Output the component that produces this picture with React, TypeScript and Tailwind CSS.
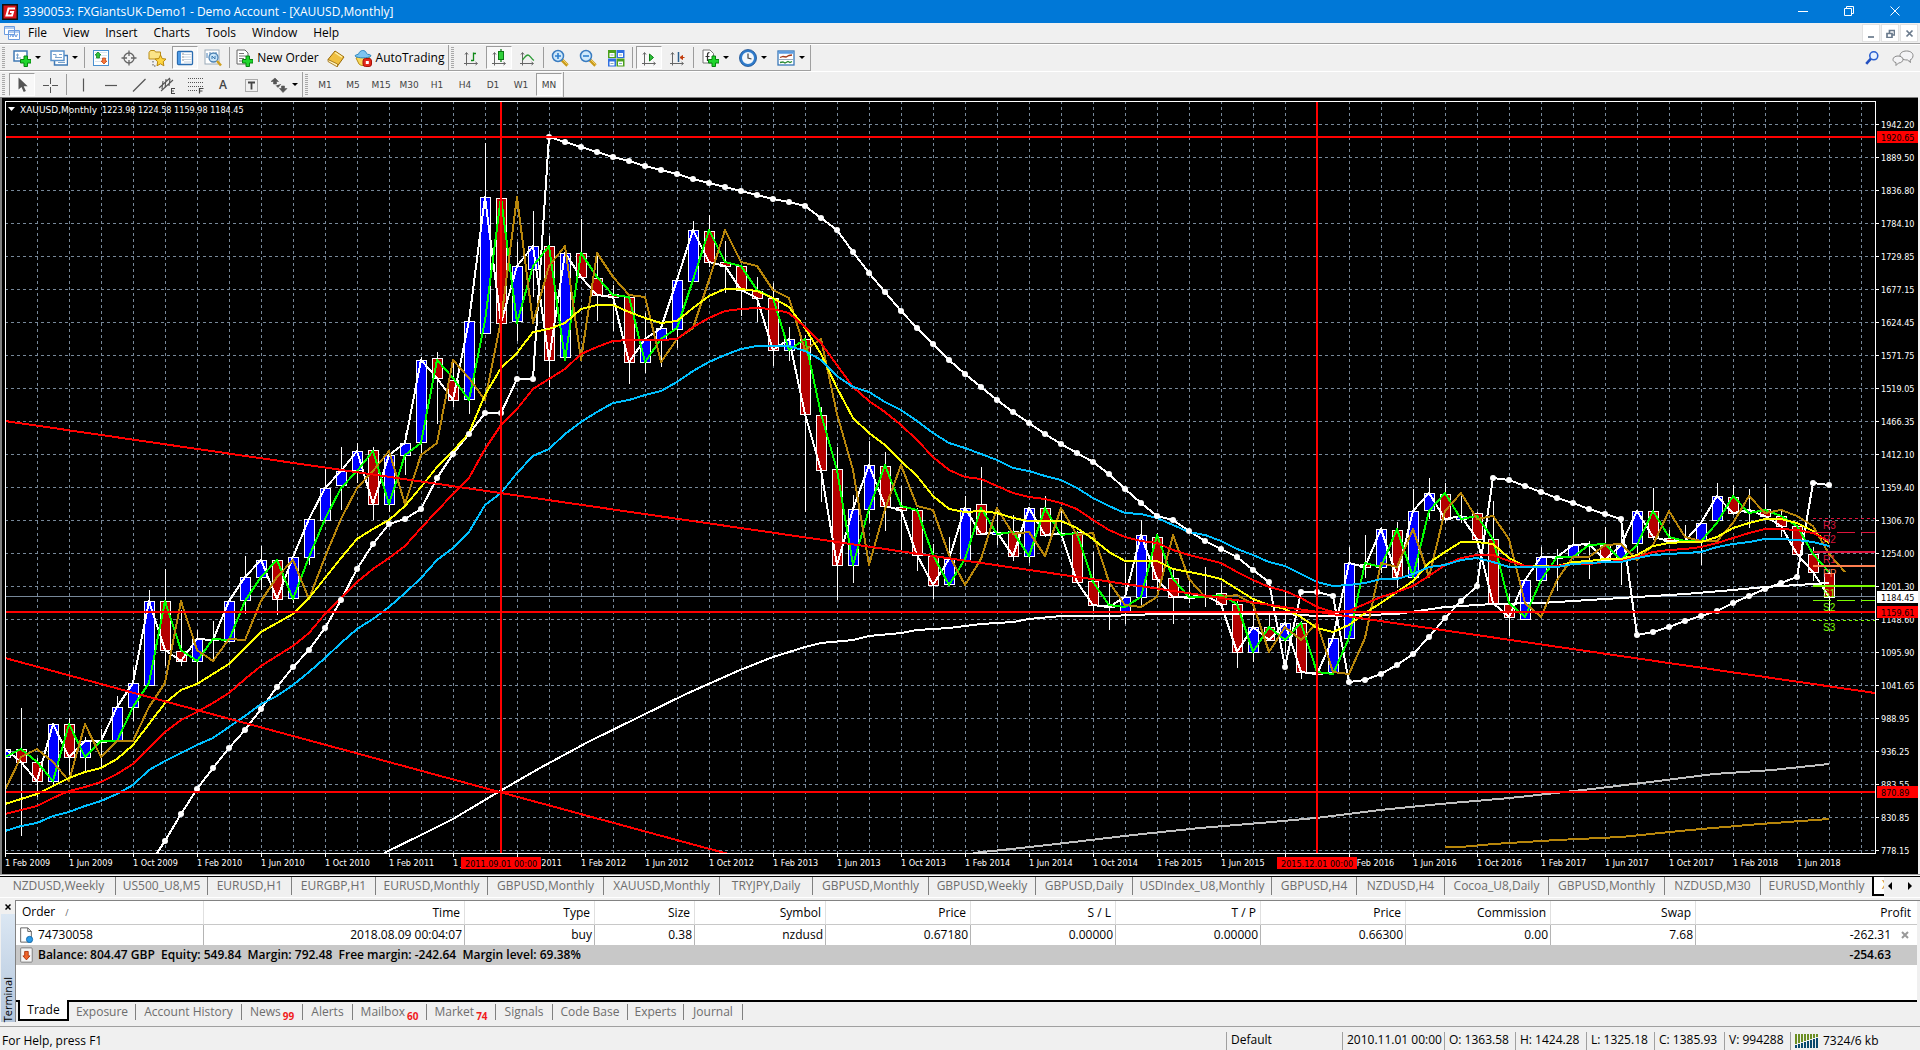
import type { ReactNode } from "react";
import clsx from "clsx";

const STEP = 16;
const LEFT = 5;
const RIGHT = 1875;
const TOP = 101;
const BOTTOM = 853;
const barX = (i: number) => LEFT + i * STEP;

// open, high, low, close - already projected on the chart's y axis
const BARS: [number, number, number, number][] = [
  [757, 708, 836, 749], [749, 708, 836, 762], [762, 758, 797, 781], [781, 724, 785, 724],
  [724, 718, 780, 757], [757, 737, 772, 741], [741, 729, 767, 741], [741, 696, 742, 707],
  [707, 667, 721, 683], [685, 590, 685, 601], [601, 569, 666, 650], [651, 610, 666, 661],
  [661, 630, 683, 639], [639, 621, 660, 640], [641, 600, 642, 601], [600, 556, 614, 577],
  [577, 546, 590, 560], [560, 559, 615, 599], [598, 557, 603, 557], [557, 519, 565, 519],
  [520, 469, 520, 488], [485, 447, 510, 471], [470, 443, 483, 451], [450, 447, 520, 504],
  [504, 453, 512, 455], [455, 433, 475, 443], [442, 357, 453, 360], [358, 352, 424, 378],
  [380, 363, 407, 400], [399, 321, 414, 321], [333, 143, 333, 197], [198, 157, 330, 323],
  [321, 242, 341, 266], [269, 211, 297, 246], [246, 236, 387, 360], [357, 250, 358, 253],
  [253, 219, 279, 277], [278, 253, 321, 295], [294, 285, 331, 297], [297, 296, 384, 362],
  [362, 313, 373, 339], [339, 323, 367, 328], [329, 278, 348, 280], [281, 221, 282, 230],
  [231, 215, 267, 262], [262, 241, 293, 266], [266, 265, 316, 290], [291, 277, 322, 298],
  [298, 283, 366, 350], [350, 327, 361, 339], [339, 335, 512, 414], [415, 407, 502, 470],
  [469, 447, 600, 565], [565, 495, 583, 509], [509, 441, 523, 465], [466, 452, 531, 506],
  [507, 486, 552, 510], [510, 508, 571, 555], [556, 544, 599, 585], [584, 537, 586, 559],
  [560, 496, 561, 508], [504, 467, 534, 534], [534, 510, 545, 532], [531, 515, 561, 556],
  [556, 507, 563, 508], [508, 496, 537, 535], [534, 510, 537, 533], [532, 531, 583, 582],
  [581, 552, 611, 605], [605, 583, 630, 607], [611, 563, 624, 597], [597, 520, 608, 535],
  [537, 533, 593, 579], [578, 570, 624, 597], [597, 577, 603, 597], [596, 567, 607, 595],
  [593, 583, 605, 604], [604, 600, 668, 652], [652, 600, 662, 627], [627, 615, 641, 640],
  [640, 592, 653, 623], [623, 621, 679, 672], [672, 655, 675, 674], [672, 637, 673, 638],
  [638, 547, 639, 563], [564, 535, 578, 567], [567, 527, 573, 529], [530, 522, 588, 577],
  [577, 489, 578, 511], [510, 478, 519, 493], [494, 483, 523, 519], [519, 492, 523, 516],
  [513, 512, 540, 539], [539, 501, 605, 603], [604, 594, 636, 617], [619, 580, 620, 580],
  [580, 547, 582, 557], [557, 549, 591, 557], [557, 527, 557, 545], [545, 541, 579, 544],
  [545, 527, 560, 560], [558, 527, 585, 545], [543, 510, 553, 511], [511, 488, 540, 537],
  [538, 530, 543, 541], [541, 525, 543, 541], [541, 521, 565, 523], [520, 483, 521, 496],
  [497, 485, 515, 513], [512, 489, 528, 510], [509, 484, 517, 516], [516, 510, 537, 526],
  [526, 525, 555, 554], [554, 547, 581, 572], [573, 571, 612, 597],
];

const FAST = [
  804, 799, 794, 786, 778, 772, 768, 759, 745, 724, 703, 690, 684, 674, 664, 648, 632, 623, 614,
  598, 578, 558, 539, 529, 520, 506, 487, 467, 451, 433, 395, 368, 353, 332, 329, 323, 309, 305,
  305, 312, 318, 323, 321, 308, 296, 289, 289, 291, 298, 307, 328, 354, 388, 418, 433, 445, 461,
  476, 496, 509, 512, 511, 513, 518, 521, 521, 521, 528, 539, 552, 561, 561, 561, 569, 572, 575,
  579, 589, 599, 605, 609, 617, 628, 632, 625, 613, 603, 592, 581, 563, 552, 542, 542, 544, 558,
  566, 566, 566, 562, 561, 559, 559, 555, 546, 543, 542, 542, 537, 528, 523, 519, 519, 523, 531,
  543,
];

const MEDIUM = [
  814, 810, 806, 798, 791, 787, 782, 774, 764, 748, 732, 720, 712, 703, 693, 679, 666, 656, 646,
  633, 614, 598, 582, 569, 558, 546, 528, 511, 494, 478, 449, 425, 409, 389, 379, 369, 354, 347,
  341, 340, 340, 340, 339, 327, 318, 311, 309, 308, 309, 313, 327, 343, 365, 387, 401, 412, 425,
  440, 457, 470, 477, 479, 486, 493, 497, 499, 503, 509, 520, 530, 537, 541, 543, 550, 555, 559,
  563, 572, 580, 587, 591, 598, 607, 612, 611, 604, 597, 592, 586, 576, 565, 558, 555, 555, 561,
  566, 567, 566, 564, 564, 562, 561, 557, 552, 550, 549, 547, 543, 538, 533, 529, 529, 530, 533,
  541,
];

const SLOW = [
  831, 826, 823, 816, 812, 806, 801, 794, 785, 770, 761, 753, 745, 738, 727, 716, 704, 696, 685,
  672, 658, 643, 629, 619, 607, 593, 578, 560, 548, 532, 505, 493, 473, 456, 449, 434, 422, 412,
  403, 400, 395, 391, 382, 371, 362, 355, 349, 346, 346, 346, 351, 360, 376, 387, 392, 402, 410,
  421, 433, 443, 448, 454, 460, 468, 471, 476, 480, 488, 498, 506, 513, 514, 518, 525, 532, 535,
  541, 549, 555, 562, 566, 574, 582, 586, 585, 583, 579, 579, 574, 567, 565, 560, 558, 562, 567,
  567, 567, 567, 564, 563, 562, 562, 558, 555, 554, 553, 552, 547, 544, 542, 539, 539, 540, 542,
  546,
];

// starts at bar 10
const SAR_FROM = 10;
const SAR = [
  841, 814, 789, 768, 748, 730, 709, 687, 667, 650, 628, 600, 569, 544, 524, 519, 509, 478, 454,
  434, 413, 413, 379, 379, 137, 142, 147, 152, 157, 161, 166, 170, 174, 179, 183, 187, 191, 195,
  199, 202, 206, 218, 230, 252, 273, 292, 311, 328, 344, 360, 374, 387, 400, 412, 423, 434, 444,
  453, 462, 474, 489, 503, 516, 520, 531, 541, 549, 557, 570, 582, 667, 592, 592, 596, 682, 680,
  674, 665, 654, 637, 618, 601, 586, 478, 480, 486, 492, 498, 503, 509, 514, 519, 635, 632, 627,
  621, 616, 611, 603, 596, 589, 583, 577, 483, 485,
];

const PRICES = [
  "1942.20", "1889.50", "1836.80", "1784.10", "1729.85", "1677.15", "1624.45", "1571.75",
  "1519.05", "1466.35", "1412.10", "1359.40", "1306.70", "1254.00", "1201.30", "1148.60",
  "1095.90", "1041.65", "988.95", "936.25", "883.55", "830.85", "778.15",
];

const PIVOTS = [
  { name: "R3", y: 518, color: "#dc143c", dash: "3 3", width: 1 },
  { name: "R2", y: 532, color: "#dc143c", dash: "18 6", width: 1 },
  { name: "R1", y: 552, color: "#dc143c", dash: undefined, width: 2 },
  { name: "PP", y: 566, color: "#ff7f50", dash: undefined, width: 2 },
  { name: "S1", y: 586, color: "#7cfc00", dash: undefined, width: 2 },
  { name: "S2", y: 600, color: "#7cfc00", dash: "18 6", width: 1 },
  { name: "S3", y: 620, color: "#7cfc00", dash: "3 3", width: 1 },
];

const toPoints = (ys: number[], from = 0) =>
  ys.map((y, i) => `${barX(i + from)},${y}`).join(" ");

const closes = BARS.map((b) => b[3]);

function Tag({ x, y, w, text, white }: { x: number; y: number; w: number; text: string; white?: boolean }) {
  return (
    <>
      <rect x={x} y={y - 6} width={w} height={12} fill={white ? "#fff" : "#f00"} />
      <text x={x + 4} y={y + 4} fill="#000">
        {text}
      </text>
    </>
  );
}

function Chart() {
  const months = ["Feb", "Jun", "Oct"];
  return (
    <svg
      viewBox="2 98 1916 776"
      className="block h-auto w-full bg-black font-['DejaVu_Sans_Condensed','DejaVu_Sans',sans-serif] text-[9px]"
      role="img"
      aria-label="XAUUSD monthly chart"
    >
      <defs>
        <clipPath id="plot">
          <rect x={LEFT} y={TOP} width={RIGHT - LEFT} height={BOTTOM - TOP} />
        </clipPath>
      </defs>

      <g stroke="#778899" strokeDasharray="3 3" shapeRendering="crispEdges">
        {PRICES.map((p, i) => (
          <line key={p} x1={LEFT} x2={RIGHT} y1={124.5 + i * 33} y2={124.5 + i * 33} />
        ))}
        {Array.from({ length: 58 }, (_, i) => (
          <line key={i} x1={37.5 + i * 32} x2={37.5 + i * 32} y1={TOP} y2={BOTTOM} />
        ))}
      </g>

      <g clipPath="url(#plot)" shapeRendering="crispEdges" fill="none">
        <line x1={LEFT} x2={RIGHT} y1={596.5} y2={596.5} stroke="#778899" />
        {BARS.map(([o, h, l, c], i) => {
          const x = barX(i) + 0.5;
          return (
            <g key={i} stroke="#fff">
              <line x1={x} x2={x} y1={h} y2={l} />
              <rect
                x={x - 5}
                y={Math.min(o, c) + 0.5}
                width={10}
                height={Math.max(Math.abs(o - c), 1)}
                fill={c < o ? "#00f" : "#b40000"}
              />
            </g>
          );
        })}
        <g strokeWidth={2} strokeLinejoin="round">
          <polyline
            stroke="#fff"
            points="384,853 421,835 453,819 500,791 540,768 588,742 637,718 686,694 740,670 773,657 805,647 821,643 853,640 869,636 901,633 917,630 949,628 981,624 1013,622 1029,619 1061,616 1109,616 1157,614 1285,614 1317,616 1333,616 1397,614 1445,607 1493,604 1541,603 1573,601 1637,597 1685,594 1733,590 1765,587 1797,585 1829,583"
          />
          <polyline
            stroke="#c0c0c0"
            points="973,853 1021,848 1065,843 1133,835 1200,828 1260,823 1316,818 1380,810 1440,804 1510,798 1592,789 1650,782 1714,774 1772,770 1829,764"
          />
          <polyline
            stroke="#b8860b"
            points="1445,847 1461,847 1493,844 1557,840 1621,837 1690,830 1760,824 1829,819"
          />
          <polyline stroke="#fff" points={toPoints(closes)} />
          <polyline stroke="#fff" points={`157,853 ${toPoints(SAR, SAR_FROM)}`} />
          <polyline stroke="#0f0" points={`5,757 ${toPoints(closes.slice(0, -1), 1)}`} />
          <polyline stroke="#b8860b" points={`5,790 21,757 ${toPoints(closes.slice(0, -1), 2)}`} />
          <polyline stroke="#ff0" points={toPoints(FAST)} />
          <polyline stroke="#f00" points={toPoints(MEDIUM)} />
          <polyline stroke="#00bfff" points={toPoints(SLOW)} />
          <line x1={5} y1={421} x2={1875} y2={693} stroke="#f00" />
          <line x1={5} y1={658} x2={732} y2={855} stroke="#f00" />
        </g>
      </g>

      <g fill="#fff">
        {SAR.map((y, i) => (
          <circle key={i} cx={barX(i + SAR_FROM)} cy={y} r={3} />
        ))}
      </g>

      <g shapeRendering="crispEdges" stroke="#f00" strokeWidth={2}>
        {[137, 612, 792].map((y) => (
          <line key={y} x1={LEFT} x2={RIGHT} y1={y} y2={y} />
        ))}
        {[501, 1317].map((x) => (
          <line key={x} x1={x} x2={x} y1={TOP} y2={BOTTOM} />
        ))}
      </g>

      {PIVOTS.map((p) => (
        <g key={p.name}>
          <line
            x1={1813}
            x2={RIGHT}
            y1={p.width === 1 ? p.y + 0.5 : p.y}
            y2={p.width === 1 ? p.y + 0.5 : p.y}
            stroke={p.color}
            strokeWidth={p.width}
            strokeDasharray={p.dash}
            shapeRendering="crispEdges"
          />
          <text x={1823} y={p.y + 11} fill={p.color} className="font-['Liberation_Sans',sans-serif] text-[10px]">
            {p.name}
          </text>
        </g>
      ))}

      <rect x={5.5} y={101.5} width={1870} height={752} fill="none" stroke="#fff" shapeRendering="crispEdges" />

      <g fill="#fff">
        <path d="M8 107h7l-3.500 4z" />
        <text x={20} y={113} className="font-['DejaVu_Sans',sans-serif]">XAUUSD,Monthly</text>
        <text x={102} y={113}>1223.98 1224.58 1159.98 1184.45</text>
        {PRICES.map((p, i) => (
          <g key={p}>
            <rect x={1876} y={124 + i * 33} width={3} height={1} />
            <text x={1881} y={128 + i * 33}>{p}</text>
          </g>
        ))}
        {Array.from({ length: 29 }, (_, k) => (
          <g key={k}>
            <rect x={5 + k * 64} y={854} width={1} height={3} />
            <text x={5 + k * 64} y={866}>
              {`1 ${months[k % 3]} ${2009 + Math.floor(k / 3)}`}
            </text>
          </g>
        ))}
      </g>
      <Tag x={1877} y={137} w={41} text="1920.65" />
      <Tag x={1877} y={597} w={41} text="1184.45" white />
      <Tag x={1877} y={612} w={41} text="1159.61" />
      <Tag x={1877} y={792} w={41} text="870.89" />
      <Tag x={461} y={863} w={80} text="2011.09.01 00:00" />
      <Tag x={1277} y={863} w={80} text="2015.12.01 00:00" />
    </svg>
  );
}

function Icon({ children, size = 18 }: { children: ReactNode; size?: 16 | 18 }) {
  return (
    <svg
      viewBox="0 0 18 18"
      className={clsx("shrink-0", size === 16 ? "size-4" : "size-[18px]")}
      fill="none"
      aria-hidden="true"
    >
      {children}
    </svg>
  );
}

const plus = <path d="M11 7h3.500v3.500H18V14h-3.500v3.500H11V14H7.500v-3.500H11z" fill="#1fd62c" stroke="#07820f" />;
const axes = <path d="M4.500 16.500V4M3 5.500l1.500-2L6 5.500M2 14.500h13M13.500 13l2 1.500-2 1.500" stroke="#666" />;
const lens = (
  <>
    <path d="M11 11l5.500 5.500" stroke="#c99a1a" strokeWidth="3.200" />
    <path d="M11.500 10.500l5 5" stroke="#f4d469" strokeWidth="1" />
    <circle cx="7" cy="7" r="5.500" fill="#cfe9fb" stroke="#3a7cc0" strokeWidth="1.500" />
  </>
);

const icons: Record<string, ReactNode> = {
  newChart: (
    <>
      <rect x="1" y="2" width="13" height="10" fill="#fff" stroke="#3f78b4" strokeWidth="1.500" />
      <path d="M4.500 10V4.500M3 6h3M3 9h5" stroke="#7aa3cc" />
      {plus}
    </>
  ),
  profiles: (
    <>
      <rect x="4.500" y="6.500" width="13" height="9.500" fill="#fff" stroke="#3f78b4" strokeWidth="1.500" />
      <rect x="1" y="2" width="13" height="9.500" fill="#fff" stroke="#5b93cc" strokeWidth="1.500" />
      <path d="M3 5.500h3v3M9 5.500h3M5 8.500h7M8 13.500h7" stroke="#7aa3cc" />
    </>
  ),
  market: (
    <>
      <rect x="1.500" y="1.500" width="15" height="15" fill="#fff" stroke="#4a90d0" />
      <path d="M3 3.500h12M3 6.500h12M3 9.500h12M3 12.500h12" stroke="#dde6ee" />
      <path d="M6 3l3 3H7.500v3h-3V6H3z" fill="#2fc13a" stroke="#0b7d13" strokeWidth=".7" />
      <path d="M12 15l-3-3h1.500V9h3v3H15z" fill="#f5773a" stroke="#c23c0c" strokeWidth=".7" />
    </>
  ),
  target: (
    <>
      <circle cx="9" cy="9" r="5" stroke="#666" strokeWidth="1.300" />
      <path d="M9 1.500v5.500M9 11v5.500M1.500 9H7M11 9h5.500" stroke="#666" strokeWidth="1.300" />
    </>
  ),
  navigator: (
    <>
      <path d="M1 3.500l1.500-2h4l1 1.500h5v7H1z" fill="#fbe488" stroke="#b98c17" />
      <path d="M5 12v5h3" stroke="#555" strokeDasharray="1.500 1.500" />
      <path d="M12.500 6l1.700 3.600 3.800.5-2.800 2.700.7 4-3.400-2-3.500 2 .7-4L7 10.100l3.800-.5z" fill="#ffd640" stroke="#b8860b" />
    </>
  ),
  terminal: (
    <>
      <rect x="1.500" y="2.500" width="15" height="13" rx="1" fill="#fff" stroke="#2a6cb0" strokeWidth="1.300" />
      <path d="M2 3h3v12H2z" fill="#4f9be6" />
      <path d="M8 5.500h7.500M8 8h7.500M8 10.500h7.500M8 13h7.500" stroke="#c6d3e0" />
      <path d="M6.500 5h1M6.500 8h1M6.500 11h1" stroke="#123" />
    </>
  ),
  tester: (
    <>
      <rect x="1" y="1" width="14" height="14" fill="#fff" stroke="#9aaab8" />
      <path d="M3 4v5M6 3v4M12 3v5" stroke="#4a80b5" />
      <circle cx="9.500" cy="8.500" r="4.500" fill="#bfe0f8" fillOpacity=".85" stroke="#4d83b4" strokeWidth="1.300" />
      <path d="M8 10V7l3 3V7" stroke="#3a78b0" />
      <path d="M13 12l4 4.500" stroke="#d0a020" strokeWidth="2.500" />
    </>
  ),
  order: (
    <>
      <path d="M2 1h8l3 3v11H2z" fill="#fff" stroke="#666" />
      <path d="M4 4.500h5M4 7h7M4 9.500h5M4 12h4" stroke="#777" />
      {plus}
    </>
  ),
  book: (
    <>
      <path d="M1 10.500L8 2l9 6-6.500 9z" fill="#f0c040" stroke="#9a6a08" />
      <path d="M1 10.500v2l9.500 5.500v-3z" fill="#fff3c0" stroke="#9a6a08" strokeWidth=".8" />
      <path d="M8 3.500l7 4.700" stroke="#fff0a8" strokeWidth="1.500" />
    </>
  ),
  auto: (
    <>
      <path d="M2 9c1-2 13-2 14 0l-3 6c-2 2-6 2-8 0z" fill="#f7d85c" stroke="#b58a14" />
      <path d="M1 7c0-1.500 3-1 4-2.500.5-3.500 6.500-4.500 7.500 0 1 1.500 4.500.5 4.500 2.500-3 2.500-13 2.500-16 0z" fill="#7cc4f0" stroke="#2b86c0" />
      <rect x="9" y="9.500" width="8.500" height="8" rx="2.500" fill="#e3291c" stroke="#a81208" />
      <rect x="11.800" y="12" width="3" height="3" fill="#fff" />
    </>
  ),
  bars: (
    <>
      {axes}
      <path d="M11.500 3.500v8.500M9 11.500h2.500M11.500 4.500H14" stroke="#108a18" strokeWidth="1.300" />
    </>
  ),
  candles: (
    <>
      {axes}
      <path d="M11 0v13" stroke="#0c7a14" strokeWidth="1.300" />
      <rect x="8.500" y="2.500" width="5" height="8" fill="#2fd03a" stroke="#0c7a14" />
    </>
  ),
  line: (
    <>
      {axes}
      <path d="M4.500 11C7 8 8 6 10 6s3 4 6 5.500" stroke="#2a9a34" strokeWidth="1.300" />
    </>
  ),
  zoomIn: (
    <>
      {lens}
      <path d="M4 7h6M7 4v6" stroke="#2f7fcf" strokeWidth="1.600" />
    </>
  ),
  zoomOut: (
    <>
      {lens}
      <path d="M4 7h6" stroke="#2f7fcf" strokeWidth="1.600" />
    </>
  ),
  tile: (
    <>
      <path d="M1 1h8v8H1zM9.500 9.500h8v8h-8z" fill="#4aa01c" />
      <path d="M9.500 1h8v8h-8zM1 9.500h8v8H1z" fill="#2f6fe0" />
      <path d="M2.500 4h5v4h-5zM11 4h5v4h-5zM2.500 12.500h5v4h-5zM11 12.500h5v4h-5z" fill="#fff" />
      <path d="M3.500 6h3M12 6h3M3.500 14.500h3M12 14.500h3" stroke="#8ab" />
    </>
  ),
  scroll: (
    <>
      {axes}
      <path d="M9.500 5v7l4-3.500z" fill="#2fc13a" stroke="#0b7d13" />
    </>
  ),
  shift: (
    <>
      {axes}
      <path d="M10.500 3v10" stroke="#2a5d8c" strokeWidth="1.500" />
      <path d="M16.500 8.500H13M14.500 6.500l-2.500 2 2.500 2z" stroke="#c23c0c" fill="#c23c0c" />
    </>
  ),
  indicators: (
    <>
      <path d="M2 1h7l3.500 3.500V14H2z" fill="#fff" stroke="#777" />
      <path d="M8.500 3.500c-2 0-2 1-2 2.500v6M4.500 7.500h4" stroke="#333" strokeWidth="1.200" />
      {plus}
    </>
  ),
  clock: (
    <>
      <circle cx="9" cy="9" r="7.300" fill="#f2f7fc" stroke="#2f7ccc" strokeWidth="2.600" />
      <circle cx="9" cy="9" r="8.500" stroke="#1c4f90" strokeWidth=".8" />
      <path d="M9 4.500V9l3.500 1" stroke="#444" strokeWidth="1.200" />
    </>
  ),
  template: (
    <>
      <rect x="1" y="2" width="16" height="14" fill="#fff" stroke="#3a78b8" strokeWidth="1.300" />
      <path d="M1.500 3.500h15" stroke="#5b9be0" strokeWidth="2.500" />
      <path d="M3 8.500l3-1 3 .5 3-1.500 3-.5" stroke="#a33a1a" strokeWidth="1.300" />
      <path d="M2 10.500h14" stroke="#9ab" />
      <path d="M3 13.500l3-.5 2 1 3-1.500 2 1 2-1" stroke="#2a8a34" strokeWidth="1.300" />
    </>
  ),
  cursor: <path d="M5.500 1.500v12l3-2.500 2.200 5 2.200-1-2.200-4.700h4z" fill="#555" />,
  cross: <path d="M9.500 2v6M9.500 11v6M2 9.500h6M11 9.500h6" stroke="#555" />,
  vline: <path d="M9.500 2.500v13" stroke="#555" strokeWidth="1.200" />,
  hline: <path d="M3 9.500h12" stroke="#555" strokeWidth="1.200" />,
  trend: <path d="M3 15.500L15.500 3" stroke="#555" strokeWidth="1.200" />,
  channel: (
    <>
      <path d="M1 12L12 2M3 15L15 4M5 5l-1 8M8 3L7 12M12 3l-1 7" stroke="#555" strokeWidth="1.100" />
      <path d="M13 12.500h4M13 15h3M13 17.500h4M13.500 12v5.500" stroke="#444" />
    </>
  ),
  fibo: (
    <>
      <path d="M2 2.500h15M2 6.500h15M2 10.500h15M2 14.500h9" stroke="#555" strokeDasharray="1 1" />
      <path d="M13.500 17.500v-5h4M13 15h3.500" stroke="#444" strokeWidth="1.200" />
    </>
  ),
  label: (
    <>
      <rect x="3.500" y="3.500" width="12" height="12" stroke="#666" strokeDasharray="1 1" />
      <path d="M6 6.500h7M9.500 6v7.500" stroke="#444" strokeWidth="1.800" />
    </>
  ),
  arrows: <path d="M1 5.500L5 2l3.500 3.500H6.500V8h-3V5.500zM6 9.500l2 2 3-3.500M9.500 12.500h2V10h3v2.500H17l-4 4z" fill="#555" stroke="#555" strokeWidth=".6" />,
};

function Grip() {
  return (
    <span className="my-0.5 mr-[3px] ml-0.5 w-[3px] shrink-0 self-stretch bg-[repeating-linear-gradient(to_bottom,#a8a8a8_0_1px,#f0f0f0_1px_2px)]" />
  );
}

function Divider() {
  return <span className="mx-0.5 h-[21px] w-px shrink-0 bg-[#9c9c9c]" />;
}

type ToolProps = { icon?: string; label: string; text?: string; pressed?: boolean; menu?: boolean; width?: string };

function Tool({ icon, label, text, pressed, menu, width = "w-7" }: ToolProps) {
  return (
    <button
      type="button"
      aria-label={label}
      aria-pressed={pressed}
      className={clsx("flex h-[23px] shrink-0 items-center justify-center whitespace-nowrap", width)}
    >
      <span
        className={clsx(
          "flex items-center justify-center gap-1",
          pressed && "h-[23px] w-[26px] border border-r-white border-b-white border-l-[#9c9c9c] border-t-[#9c9c9c] bg-[#f8f8f8]",
        )}
      >
        {icon && <Icon size={18}>{icons[icon]}</Icon>}
        {text}
        {menu && <span className="border-x-[3px] border-t-[3px] border-x-transparent border-t-black" />}
      </span>
    </button>
  );
}

const FRAMES = ["M1", "M5", "M15", "M30", "H1", "H4", "D1", "W1", "MN"];

function Toolbars() {
  return (
    <div className="flex flex-col border-t border-[#a0a0a0]">
      <div className="flex h-[27px] border-t border-white">
        <div className="flex items-center border-r border-b border-[#a0a0a0]">
          <Grip />
          <Tool icon="newChart" label="New chart" menu width="w-[37px]" />
          <Tool icon="profiles" label="Profiles" menu width="w-[37px]" />
          <Divider />
          <Tool icon="market" label="Market Watch" />
          <Tool icon="target" label="Data Window" />
          <Tool icon="navigator" label="Navigator" />
          <Tool icon="terminal" label="Terminal" pressed />
          <Tool icon="tester" label="Strategy Tester" />
          <Divider />
          <Tool icon="order" label="New Order" text="New Order" width="w-[90px]" />
          <Tool icon="book" label="MetaEditor" />
          <Tool icon="auto" label="AutoTrading" text="AutoTrading" width="w-[98px]" />
        </div>
        <div className="flex items-center border-r border-b border-[#a0a0a0]">
          <Grip />
          <Tool icon="bars" label="Bar chart" />
          <Tool icon="candles" label="Candlesticks" pressed />
          <Tool icon="line" label="Line chart" />
          <Divider />
          <Tool icon="zoomIn" label="Zoom in" />
          <Tool icon="zoomOut" label="Zoom out" />
          <Tool icon="tile" label="Tile windows" />
          <Divider />
          <Tool icon="scroll" label="Auto scroll" pressed />
          <Tool icon="shift" label="Chart shift" />
          <Divider />
          <Tool icon="indicators" label="Indicators" menu width="w-[38px]" />
          <Tool icon="clock" label="Periods" menu width="w-[38px]" />
          <Tool icon="template" label="Templates" menu width="w-[38px]" />
        </div>
        <div className="ml-auto flex items-center gap-3 pr-1.5">
          <button type="button" aria-label="Search">
            <Icon size={16}>
              <circle cx="11" cy="6.500" r="4.500" fill="#e6f0ff" stroke="#2a5fd0" strokeWidth="1.800" />
              <path d="M7.500 10L2.500 15.500" stroke="#2450c0" strokeWidth="3" />
            </Icon>
          </button>
          <button type="button" aria-label="Chat">
            <svg viewBox="0 0 22 16" className="h-4 w-[22px]" fill="#f4f4f6" stroke="#888" aria-hidden="true">
              <path d="M14.500 1c4 0 6.500 2 6.500 4.500S19.500 9.500 18 10l.5 2.500L15.500 10c-5 0-7.500-2-7.500-4.500S10.500 1 14.500 1z" />
              <path d="M6 6c3 0 5 1.600 5 3.500S9 13 6.500 13L4 15.500 4 12.600C2 12 1 11 1 9.500 1 7.600 3 6 6 6z" />
            </svg>
          </button>
        </div>
      </div>
      <div className="flex h-[26px] border-t border-white font-['DejaVu_Sans',sans-serif] text-[9px] text-[#444]">
        <div className="flex items-center border-r border-[#a0a0a0]">
          <Grip />
          <Tool icon="cursor" label="Cursor" pressed />
          <Tool icon="cross" label="Crosshair" />
          <Divider />
          <Tool icon="vline" label="Vertical line" />
          <Tool icon="hline" label="Horizontal line" />
          <Tool icon="trend" label="Trendline" />
          <Tool icon="channel" label="Equidistant channel" />
          <Tool icon="fibo" label="Fibonacci retracement" />
          <button type="button" className="w-7 font-['Open_Sans',sans-serif] text-xs font-semibold">
            A
          </button>
          <Tool icon="label" label="Text label" />
          <Tool icon="arrows" label="Arrows" menu width="w-[37px]" />
        </div>
        <div className="flex items-center border-r border-[#a0a0a0]">
          <Grip />
          {FRAMES.map((f) => (
            <Tool key={f} label={f} text={f} pressed={f === "MN"} />
          ))}
        </div>
      </div>
    </div>
  );
}

const CHART_TABS = [
  { name: "NZDUSD,Weekly", w: "w-[114px]" },
  { name: "US500_U8,M5", w: "w-[92px]" },
  { name: "EURUSD,H1", w: "w-[84px]" },
  { name: "EURGBP,H1", w: "w-[84px]" },
  { name: "EURUSD,Monthly", w: "w-[112px]" },
  { name: "GBPUSD,Monthly", w: "w-[116px]" },
  { name: "XAUUSD,Monthly", w: "w-[116px]" },
  { name: "TRYJPY,Daily", w: "w-[93px]" },
  { name: "GBPUSD,Monthly", w: "w-[116px]" },
  { name: "GBPUSD,Weekly", w: "w-[107px]" },
  { name: "GBPUSD,Daily", w: "w-[97px]" },
  { name: "USDIndex_U8,Monthly", w: "w-[139px]" },
  { name: "GBPUSD,H4", w: "w-[85px]" },
  { name: "NZDUSD,H4", w: "w-[88px]" },
  { name: "Cocoa_U8,Daily", w: "w-[104px]" },
  { name: "GBPUSD,Monthly", w: "w-[116px]" },
  { name: "NZDUSD,M30", w: "w-[96px]" },
  { name: "EURUSD,Monthly", w: "w-[111px]" },
];

function ChartTabs() {
  return (
    <nav className="flex h-[22px] items-start overflow-hidden border-t border-b border-t-black border-b-white pl-0.5 text-[#6d6d6d]">
      {CHART_TABS.map((t, i) => (
        <button
          key={i}
          type="button"
          className={clsx(
            "flex h-[18px] shrink-0 items-center justify-center whitespace-nowrap border-[#808080]",
            i < CHART_TABS.length - 1 && "border-r",
            t.w,
          )}
        >
          {t.name}
        </button>
      ))}
      <button
        type="button"
        aria-label="XAUUSD,Monthly"
        className="-mt-px h-5 w-3 shrink-0 overflow-hidden border-b-2 border-l-2 border-black bg-white pl-2 text-left text-[#c08020]"
      >
        X
      </button>
      <div className="ml-auto flex h-[18px] items-center gap-4 pr-2">
        <button type="button" aria-label="Previous tabs" className="border-y-4 border-r-4 border-y-transparent border-r-black" />
        <button type="button" aria-label="Next tabs" className="border-y-4 border-l-4 border-y-transparent border-l-black" />
      </div>
    </nav>
  );
}

const COLUMNS = [
  { name: "Order", value: "74730058", w: "w-[188px]" },
  { name: "Time", value: "2018.08.09 00:04:07", w: "w-[261px]" },
  { name: "Type", value: "buy", w: "w-[130px]" },
  { name: "Size", value: "0.38", w: "w-[100px]" },
  { name: "Symbol", value: "nzdusd", w: "w-[131px]" },
  { name: "Price", value: "0.67180", w: "w-[145px]" },
  { name: "S / L", value: "0.00000", w: "w-[145px]" },
  { name: "T / P", value: "0.00000", w: "w-[145px]" },
  { name: "Price", value: "0.66300", w: "w-[145px]" },
  { name: "Commission", value: "0.00", w: "w-[145px]" },
  { name: "Swap", value: "7.68", w: "w-[145px]" },
];

const TERMINAL_TABS = [
  { name: "Exposure", w: "w-[67px]" },
  { name: "Account History", w: "w-[106px]" },
  { name: "News", count: 99, w: "w-[61px]" },
  { name: "Alerts", w: "w-[50px]" },
  { name: "Mailbox", count: 60, w: "w-[74px]" },
  { name: "Market", count: 74, w: "w-[69px]" },
  { name: "Signals", w: "w-[57px]" },
  { name: "Code Base", w: "w-[75px]" },
  { name: "Experts", w: "w-[56px]" },
  { name: "Journal", w: "w-[59px]" },
];

function Terminal() {
  return (
    <section className="mt-0.5 flex flex-1 border-b border-[#a0a0a0] pb-1">
      <div className="flex w-[15px] shrink-0 flex-col items-center">
        <button type="button" aria-label="Close terminal" className="h-3.5">
          <svg viewBox="0 0 6 6" className="size-1.5" stroke="#000" strokeWidth="1.500" aria-hidden="true">
            <path d="M.5.5l5 5M5.500.5l-5 5" />
          </svg>
        </button>
        <div className="flex w-3.5 flex-1 items-center bg-linear-to-b from-[#dbe7f3] to-[#b4c6dc] text-[11px] leading-[14px] [writing-mode:sideways-lr]">
          Terminal
        </div>
      </div>
      <div className="flex flex-1 flex-col border-t border-l border-[#828282]">
        <div className="mr-[3px] flex-1 border-b-2 border-b-black bg-white">
          <table className="w-full table-fixed border-separate border-spacing-0 text-right">
            <thead>
              <tr className="h-6">
                {COLUMNS.map((c, i) => (
                  <th
                    key={i}
                    className={clsx(
                      "border-r border-b border-r-[#e0e0e0] border-b-[#c8c8c8] pr-1 font-normal",
                      i === 0 && "pl-1.5 text-left",
                      c.w,
                    )}
                  >
                    {c.name}
                    {i === 0 && <span className="pl-2.5 text-[9px] text-[#666]">/</span>}
                  </th>
                ))}
                <th className="border-b border-[#c8c8c8] pr-1.5 font-normal">Profit</th>
              </tr>
            </thead>
            <tbody>
              <tr className="h-5">
                {COLUMNS.map((c, i) => (
                  <td key={i} className="border-r border-[#b4b4b4] pr-0.5">
                    {i === 0 ? (
                      <span className="flex items-center gap-1 pl-0.5">
                        <Icon size={16}>
                          <path d="M3 1h8l4 4v12H3z" fill="#fff" stroke="#555" />
                          <path d="M11 1v4h4" stroke="#555" />
                          <circle cx="13" cy="14" r="3.500" fill="#2a9be8" stroke="#1468a8" />
                        </Icon>
                        {c.value}
                      </span>
                    ) : (
                      c.value
                    )}
                  </td>
                ))}
                <td>
                  <span className="flex items-center justify-end gap-2.5 pr-2">
                    -262.31
                    <button type="button" aria-label="Close order">
                      <svg viewBox="0 0 8 8" className="size-2" stroke="#999" strokeWidth="2" aria-hidden="true">
                        <path d="M1 1l6 6M7 1L1 7" />
                      </svg>
                    </button>
                  </span>
                </td>
              </tr>
              <tr className="h-5 bg-[#c8c8c8] font-semibold">
                <td colSpan={11} className="text-left">
                  <span className="flex items-center gap-1 whitespace-pre pl-0.5">
                    <Icon size={16}>
                      <rect x="3" y="1" width="13" height="16" rx="1" fill="#f4f4f4" stroke="#777" />
                      <path d="M9.500 14.500L5.500 10h2V5h4v5h2z" fill="#f0642a" stroke="#a8300a" />
                    </Icon>
                    {"Balance: 804.47 GBP  Equity: 549.84  Margin: 792.48  Free margin: -242.64  Margin level: 69.38%"}
                  </span>
                </td>
                <td className="pr-[26px]">-254.63</td>
              </tr>
            </tbody>
          </table>
        </div>
        <nav className="flex h-5 items-start pl-0.5 text-[#6d6d6d]">
          <button type="button" className="-mt-0.5 h-[21px] w-[51px] border-2 border-t-0 border-black bg-white text-black">
            Trade
          </button>
          {TERMINAL_TABS.map((t) => (
            <button
              key={t.name}
              type="button"
              className={clsx("mt-0.5 flex h-4 items-center justify-center gap-0.5 whitespace-nowrap border-r border-[#808080]", t.w)}
            >
              {t.name}
              {t.count && <span className="pt-2 text-[10px] font-bold text-[#f01c1c]">{t.count}</span>}
            </button>
          ))}
        </nav>
      </div>
    </section>
  );
}

const STATUS = [
  { text: "Default", w: "w-[116px]" },
  { text: "2010.11.01 00:00", w: "w-[102px]" },
  { text: "O: 1363.58", w: "w-[71px]" },
  { text: "H: 1424.28", w: "w-[71px]" },
  { text: "L: 1325.18", w: "w-[68px]" },
  { text: "C: 1385.93", w: "w-[70px]" },
  { text: "V: 994288", w: "w-[66px]" },
];

function StatusBar() {
  return (
    <footer className="flex h-[23px] shrink-0 items-center whitespace-nowrap pt-1">
      <span className="flex-1 pl-0.5">For Help, press F1</span>
      {STATUS.map((s) => (
        <span key={s.text} className={clsx("h-[18px] border-l border-[#a0a0a0] pl-1", s.w)}>
          {s.text}
        </span>
      ))}
      <span className="flex h-[18px] w-[130px] items-center gap-1 border-l border-[#a0a0a0] pl-1">
        <svg viewBox="0 0 24 14" className="h-3.5 w-6" aria-hidden="true">
          {Array.from({ length: 8 }, (_, i) => (
            <g key={i}>
              <rect x={i * 3} y={0} width={2} height={10 - i} fill="#6b8e23" />
              <rect x={i * 3} y={11 - i} width={2} height={3 + i} fill="#0a4a6e" />
            </g>
          ))}
        </svg>
        7324/6 kb
      </span>
    </footer>
  );
}

function TitleBar() {
  return (
    <header className="flex h-[23px] items-center bg-[#0078d7] pr-0.5 pl-0.5 text-white">
      <svg viewBox="0 0 16 16" className="mr-[5px] size-4" aria-hidden="true">
        <rect width="16" height="16" fill="#111" />
        <rect x="1.500" y="1.500" width="13" height="13" fill="#d8161c" />
        <path d="M13 4.500H6.500L4.500 11.500H10l1-3.500H8" fill="none" stroke="#fff" strokeWidth="2" />
      </svg>
      <h1 className="flex-1">3390053: FXGiantsUK-Demo1 - Demo Account - [XAUUSD,Monthly]</h1>
      {[
        { label: "Minimize", d: "M0 5.500h10" },
        { label: "Restore", d: "M.5 2.500h7v7h-7zM2.500 2.500v-2h7v7h-2" },
        { label: "Close", d: "M.5.5l9 9M9.500.5l-9 9" },
      ].map((b) => (
        <button key={b.label} type="button" aria-label={b.label} className="flex w-[46px] justify-center pb-0.5">
          <svg viewBox="0 0 10 10" className="size-2.5" fill="none" stroke="#fff" aria-hidden="true">
            <path d={b.d} />
          </svg>
        </button>
      ))}
    </header>
  );
}

function MenuBar() {
  return (
    <div className="flex h-5 items-center pl-1">
      <svg viewBox="0 0 16 14" className="mr-1.5 h-3.5 w-4" fill="#fff" stroke="#6a9be0" aria-hidden="true">
        <path d="M.5.5h10v8H.5zM4.500 4.500h11v9h-11z" />
        <path d="M1 2h9M5 6h10M6 11l1.500-3L9 11l1.500-3 1.500 3 1.500-3" fill="none" />
      </svg>
      {["File", "View", "Insert", "Charts", "Tools", "Window", "Help"].map((m) => (
        <button key={m} type="button" className="mr-3 px-0.5">
          {m}
        </button>
      ))}
      <div className="ml-auto flex gap-px pr-0.5">
        {[
          { label: "Minimize chart", d: "M1 8h6" },
          { label: "Restore chart", d: "M1 4.500h5v4H1zM3.500 4V1.500h5V6H6.500" },
          { label: "Close chart", d: "M1.500 1.500l6 6M7.500 1.500l-6 6" },
        ].map((b) => (
          <button key={b.label} type="button" aria-label={b.label} className="flex h-[18px] w-[18px] items-center justify-center border border-[#e2e2e2] bg-white">
            <svg viewBox="0 0 9 9" className="size-[9px]" fill="none" stroke="#6a7a8c" strokeWidth="1.700" aria-hidden="true">
              <path d={b.d} />
            </svg>
          </button>
        ))}
      </div>
    </div>
  );
}

export default function App() {
  return (
    <div className="flex min-h-screen flex-col bg-[#f0f0f0] font-['Open_Sans','Noto_Sans',sans-serif] text-xs leading-4 text-black">
      <TitleBar />
      <MenuBar />
      <Toolbars />
      <main className="mr-0.5 border-t border-l-2 border-[#808080]">
        <Chart />
      </main>
      <div className="h-0.5 border-t border-[#a0a0a0] bg-white" />
      <ChartTabs />
      <Terminal />
      <StatusBar />
    </div>
  );
}
